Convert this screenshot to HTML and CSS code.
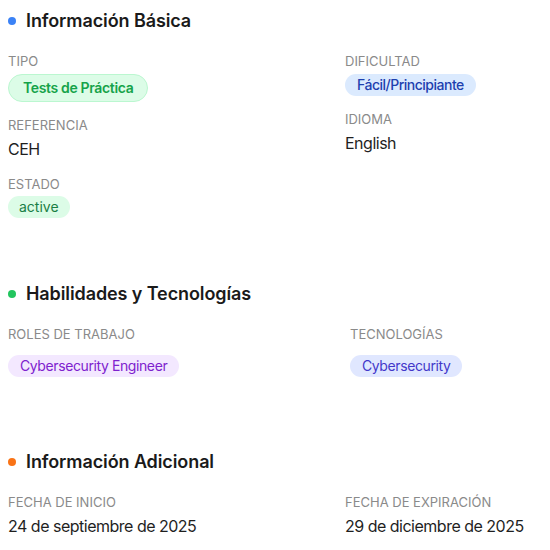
FILE: index.html
```html
<!DOCTYPE html>
<html lang="es">
<head>
<meta charset="utf-8">
<title>Detalles</title>
<link rel="stylesheet" href="styles.css">
</head>
<body>
<main class="page">
  <section class="section section-basic">
    <h2 class="section-title"><span class="dot dot-blue"></span>Información Básica</h2>
    <div class="grid grid-wide">
      <div class="col">
        <div class="field">
          <div class="label">Tipo</div>
          <div class="badges"><span class="badge badge-type">Tests de Práctica</span></div>
        </div>
        <div class="field">
          <div class="label">Referencia</div>
          <div class="value">CEH</div>
        </div>
        <div class="field">
          <div class="label">Estado</div>
          <div class="badges badges-tight"><span class="badge badge-active">active</span></div>
        </div>
      </div>
      <div class="col">
        <div class="field">
          <div class="label">Dificultad</div>
          <div class="badges"><span class="badge badge-blue">Fácil/Principiante</span></div>
        </div>
        <div class="field">
          <div class="label">Idioma</div>
          <div class="value">English</div>
        </div>
      </div>
    </div>
  </section>

  <section class="section section-skills">
    <h2 class="section-title"><span class="dot dot-green"></span>Habilidades y Tecnologías</h2>
    <div class="grid grid-skills">
      <div class="col">
        <div class="field">
          <div class="label">Roles de trabajo</div>
          <div class="badges badges-list"><span class="badge badge-purple">Cybersecurity Engineer</span></div>
        </div>
      </div>
      <div class="col">
        <div class="field">
          <div class="label">Tecnologías</div>
          <div class="badges badges-list"><span class="badge badge-indigo">Cybersecurity</span></div>
        </div>
      </div>
    </div>
  </section>

  <section class="section section-extra">
    <h2 class="section-title"><span class="dot dot-orange"></span>Información Adicional</h2>
    <div class="grid grid-wide">
      <div class="col">
        <div class="field">
          <div class="label">Fecha de inicio</div>
          <div class="value">24 de septiembre de 2025</div>
        </div>
      </div>
      <div class="col">
        <div class="field">
          <div class="label">Fecha de expiración</div>
          <div class="value">29 de diciembre de 2025</div>
        </div>
      </div>
    </div>
  </section>
</main>
</body>
</html>
```

FILE: styles.css
```css
* { box-sizing: border-box; }

html, body {
  margin: 0;
  padding: 0;
  background: #ffffff;
}

body {
  font-family: Inter, "Noto Sans", "Liberation Sans", sans-serif;
  color: #1c1c1c;
}

.page {
  padding: 7px 8px 0 8px;
  display: flex;
  flex-direction: column;
}

.section-basic { margin-bottom: 62px; }
.section-skills { margin-bottom: 71px; }

.section-title {
  margin: 0 0 17px 0;
  display: flex;
  align-items: center;
  gap: 10px;
  font-size: 18px;
  line-height: 28px;
  font-weight: 600;
  color: #1a1a1a;
  letter-spacing: -0.1px;
}

.dot {
  width: 8px;
  height: 8px;
  border-radius: 50%;
  flex: none;
}
.dot-blue { background: #3b82f6; }
.dot-green { background: #22c55e; }
.dot-orange { background: #f97316; }

.grid {
  display: grid;
}
.grid-wide { grid-template-columns: 337px 1fr; }
.grid-skills { grid-template-columns: 342px 1fr; }

.col {
  display: flex;
  flex-direction: column;
  gap: 14px;
}

.label {
  font-size: 13px;
  line-height: 18px;
  color: #8a8a8a;
  text-transform: uppercase;
  font-weight: 400;
}

.value {
  margin-top: 3px;
  font-size: 16px;
  line-height: 24px;
  color: #1f1f1f;
  letter-spacing: -0.5px;
}

.badges {
  display: flex;
  flex-wrap: wrap;
  gap: 8px;
  margin-top: 4px;
}
.badges-tight { margin-top: 3px; }
.badges-list { margin-top: 12px; }

.badge {
  display: inline-block;
  font-size: 14px;
  line-height: 16px;
  padding: 3px 12px;
  border-radius: 999px;
  font-weight: 500;
  white-space: nowrap;
  letter-spacing: -0.4px;
}

.badge-type {
  padding: 5px 14px;
  background: #dcfce7;
  border: 1px solid #bbf7d0;
  color: #16a34a;
  font-weight: 600;
  letter-spacing: -0.35px;
}
.badge-active {
  padding: 3px 11px;
  background: #dcfce7;
  color: #1a7f45;
  font-weight: 400;
  letter-spacing: 0;
}
.badge-blue {
  background: #dbeafe;
  color: #1e40af;
  letter-spacing: -0.5px;
}
.badge-purple {
  background: #f3e8ff;
  color: #7e22ce;
  font-weight: 400;
}
.badge-indigo {
  background: #e0e7ff;
  color: #4338ca;
  font-weight: 400;
}
```
